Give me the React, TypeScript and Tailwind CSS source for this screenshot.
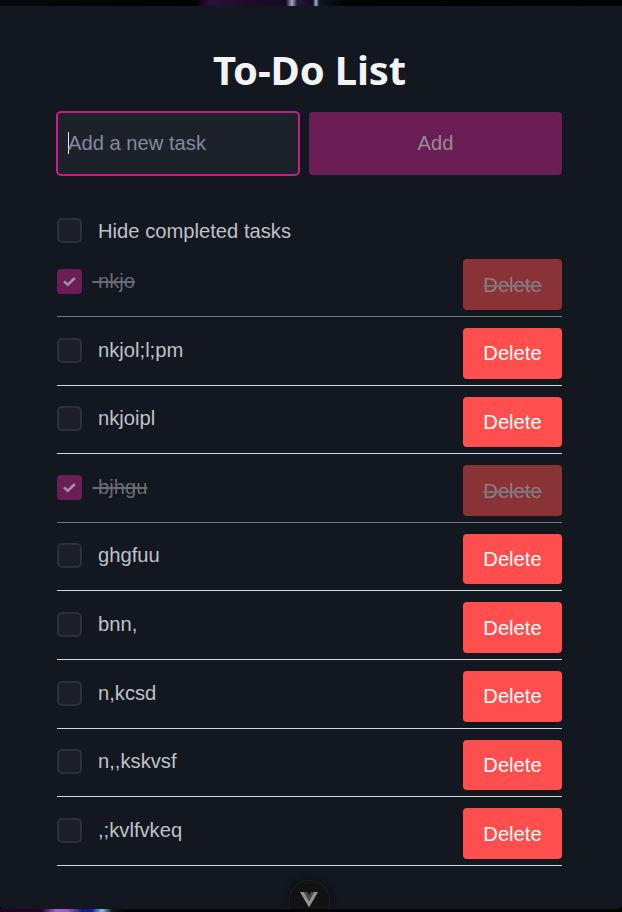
type Task = { text: string; done?: boolean };

const tasks: Task[] = [
  { text: "nkjo", done: true },
  { text: "nkjol;l;pm" },
  { text: "nkjoipl" },
  { text: "bjhgu", done: true },
  { text: "ghgfuu" },
  { text: "bnn," },
  { text: "n,kcsd" },
  { text: "n,,kskvsf" },
  { text: ",;kvlfvkeq" },
];

function CheckBox({ checked = false }: { checked?: boolean }) {
  if (checked) {
    return (
      <span className="flex size-[25px] shrink-0 items-center justify-center rounded-[4px] bg-[#6b1d56]">
        <svg className="size-[13px]" viewBox="0 0 13 13" fill="none" stroke="#9b9499" strokeWidth="2.6" strokeLinecap="butt" strokeLinejoin="miter">
          <path d="M1 6.4 L4.8 9.8 L11.9 3" />
        </svg>
      </span>
    );
  }
  return <span className="size-[25px] shrink-0 rounded-[5px] border-2 border-[#2a303c] bg-[#1c1f28]" />;
}

function TaskRow({ task }: { task: Task }) {
  return (
    <li className={`flex h-[68.6px] items-start justify-between border-b pt-[11.1px] ${task.done ? "border-[#74767b]" : "border-[#d4d6d8]"}`}>
      <div className="flex pt-[9.5px]">
        <CheckBox checked={task.done} />
        {task.done ? (
          <span className="ml-[10.4px] whitespace-pre text-[20.2px] leading-[25px] text-[#686b72] line-through decoration-2">{" " + task.text}</span>
        ) : (
          <span className="ml-4 text-[20.2px] leading-[25px] text-[#bfc2c8]">{task.text}</span>
        )}
      </div>
      <button
        className={`h-[50.5px] w-[99px] rounded-[4px] pt-[0.4px] text-[20.2px] ${
          task.done ? "bg-[#893337] text-[#8d7e83] line-through decoration-[#74757c] decoration-2" : "bg-[#ff4e4e] text-white"
        }`}
      >
        Delete
      </button>
    </li>
  );
}

export default function App() {
  return (
    <div className="relative flex h-[912px] w-[622px] flex-col overflow-hidden bg-black font-['Liberation_Sans',Arial,sans-serif]">
      <div className="h-[6px] shrink-0 bg-[linear-gradient(90deg,#08080c_0px,#020204_195px,#291235_210px,#210b25_250px,#160b23_286px,#a6a8c8_292px,#241639_297px,#150e22_313px,#a5b4dc_316px,#101522_319px,#030406_345px,#000_622px)]" />
      <main className="flex h-[903px] shrink-0 flex-col rounded-b-[4px] bg-[#13171f] pl-[57px] pr-[60px]">
        <h1 className="mt-[36px] h-[56px] text-center font-['Noto_Sans','Open_Sans',sans-serif] text-[40px] font-bold leading-[56px] tracking-[-0.15px] text-[#f2f3f5]">
          To-Do List
        </h1>
        <div className="mt-[14px] flex h-[63px] gap-[10px]">
          <div className="flex w-[242px] items-center rounded-[4px] bg-[#1d2129] pb-px pl-[11px] outline-2 -outline-offset-1 outline-[#c41f89]">
            <span className="h-[22px] w-px bg-[#e5e7eb]" />
            <span className="-ml-px text-[20.2px] text-[#838a9d]">Add a new task</span>
          </div>
          <button className="flex-1 rounded-[4px] bg-[#6b1d56] pb-px text-[20.2px] text-[#948b94]">Add</button>
        </div>
        <label className="mt-[43px] flex h-[25px] items-center gap-4 text-[20.2px] text-[#bfc2c8]">
          <CheckBox />
          <span className="pt-px">Hide completed tasks</span>
        </label>
        <ul className="mt-[5.4px]">
          {tasks.map((task) => (
            <TaskRow key={task.text} task={task} />
          ))}
        </ul>
      </main>
      <div className="h-[3px] shrink-0 bg-[linear-gradient(90deg,#200222_0px,#250527_42px,#9e66c4_56px,#9960c4_67px,#161b80_82px,#1519a4_92px,#8ebfd4_102px,#15161f_112px,#000_130px)]" />
      <div className="absolute left-[289px] top-[880px] flex h-[29px] w-[41px] justify-center rounded-t-[20px] border-x border-t border-[#1e1f21] bg-[#121212] pr-[2px] pt-[11px] shadow-[0_0_6px_#0b0e13]">
        <svg className="h-[16px] w-[18px]" viewBox="0 0 18 16">
          <path d="M0 0 H4 L9 9 L14 0 H18 L9 15.5 Z" fill="#929292" />
          <path d="M4 0 H7 L9 3.4 L11 0 H14 L9 9 Z" fill="#4b4b4b" />
        </svg>
      </div>
    </div>
  );
}
